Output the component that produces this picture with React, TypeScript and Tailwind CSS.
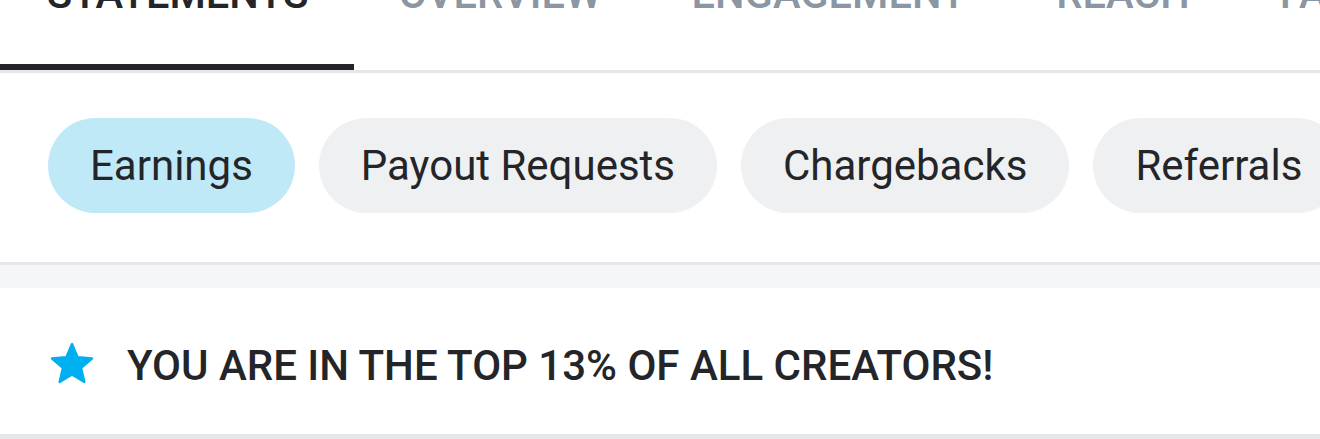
import React from "react";

const tabs = ["STATEMENTS", "OVERVIEW", "ENGAGEMENT", "REACH", "FANS"];
const chips = ["Earnings", "Payout Requests", "Chargebacks", "Referrals", "Statistics"];

export default function App() {
  return (
    <div
      className="w-[1320px] h-[439px] overflow-hidden bg-white"
      style={{ fontFamily: "Roboto, 'Liberation Sans', sans-serif" }}
    >
      {/* Tabs */}
      <div className="flex h-[73px] border-b-[3px] border-[#e4e6ea] overflow-hidden whitespace-nowrap">
        {tabs.map((t, i) => (
          <div
            key={t}
            className={
              i === 0
                ? "shrink-0 h-[70px] pl-[47px] pr-[45px] border-b-[6px] border-[#242529] text-[#242529]"
                : "shrink-0 h-[70px] pl-[45px] pr-[45px] text-[#8a96a3]"
            }
          >
            <div className="mt-[-26px] text-[41.6px] leading-[40px] font-medium">{t}</div>
          </div>
        ))}
      </div>

      {/* Chips */}
      <div className="flex gap-[24px] pl-[48px] pt-[45px] h-[189px] whitespace-nowrap overflow-hidden">
        {chips.map((c, i) => (
          <div
            key={c}
            className={
              i === 0
                ? "shrink-0 h-[95px] px-[42px] rounded-full bg-[#c0e9f8] text-[#242529] flex items-center text-[42px]"
                : "shrink-0 h-[95px] px-[42px] rounded-full bg-[#eff0f2] text-[#242529] flex items-center text-[42px]"
            }
          >
            {c}
          </div>
        ))}
      </div>

      {/* Separator */}
      <div className="h-[26px] border-t-[3px] border-[#e4e6ea] bg-[#f5f6f8]" />

      {/* Banner */}
      <div className="h-[151px] flex items-center pt-[8px] pl-[48px] gap-[31px] border-b-[5px] border-[#e4e6ea]">
        <svg width="48" height="48" viewBox="0 0 24 24" className="shrink-0 mt-[-2px]">
          <path
            fill="#00aff0"
            stroke="#00aff0"
            strokeWidth="1.2"
            strokeLinejoin="round"
            d="M12 17.27L18.18 21l-1.64-7.03L22 9.24l-7.19-.61L12 2 9.19 8.63 2 9.24l5.46 4.73L5.82 21z"
          />
        </svg>
        <div className="text-[42px] font-medium text-[#242529] whitespace-nowrap">
          YOU ARE IN THE TOP 13% OF ALL CREATORS!
        </div>
      </div>
    </div>
  );
}
